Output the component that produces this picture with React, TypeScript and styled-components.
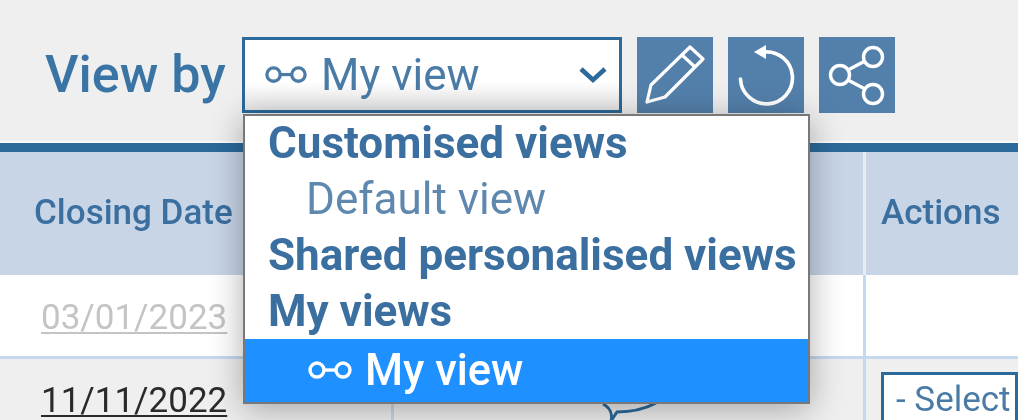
import React from "react";
import styled, { createGlobalStyle } from "styled-components";

const Global = createGlobalStyle`
  html, body { margin: 0; padding: 0; background: #efefef; }
  body { font-family: Roboto, "Liberation Sans", sans-serif; }
  #root { width: 1018px; height: 420px; overflow: hidden; }
`;

const Page = styled.div`
  position: relative;
  width: 1018px;
  height: 420px;
  overflow: hidden;
  background: #efefef;
  filter: blur(0.6px);
`;

const Toolbar = styled.div`
  height: 141px;
  box-sizing: border-box;
  padding: 37px 0 0 45px;
  display: flex;
  align-items: flex-start;
`;

const ViewLabel = styled.span`
  font-size: 52px;
  font-weight: 500;
  line-height: 76px;
  color: #3a74a4;
  margin-right: 14px;
  white-space: nowrap;
  width: 183px;
`;

const SelectBox = styled.div`
  width: 380px;
  height: 76px;
  box-sizing: border-box;
  border: 3px solid #2b6a9b;
  background: linear-gradient(#fff 60%, #e6e6e6);
  display: flex;
  align-items: center;
  padding: 0 12px 0 19px;
  color: #4a7ba6;
  font-size: 44px;
  gap: 13px;
  margin-right: 15px;
`;

const SelectText = styled.span`
  flex: 1;
  line-height: 1;
`;

const ToolButton = styled.div`
  width: 76px;
  height: 76px;
  background: #5380ab;
  color: #fff;
  margin-right: 15px;
  display: flex;
  align-items: center;
  justify-content: center;
`;

const Rule = styled.div`
  height: 9px;
  background: #2b6a9b;
  border-top: 2px solid #fafafa;
`;

const Grid = styled.div`
  display: grid;
  grid-template-columns: 394px 472px 1fr;
  grid-template-rows: 123px 84px 61px;
`;

const HeadCell = styled.div<{ $last?: boolean }>`
  background: #c8d5e7;
  color: #3a6f9f;
  font-size: 35px;
  font-weight: 500;
  display: flex;
  align-items: center;
  border-right: ${(p) => (p.$last ? "none" : "3px solid #e6ecf4")};
  box-sizing: border-box;
  padding-left: ${(p) => (p.$last ? "15px" : "34px")};
  padding-bottom: 2px;
  white-space: nowrap;
`;

const BodyCell = styled.div<{ $alt?: boolean; $last?: boolean }>`
  background: ${(p) => (p.$alt ? "#efefef" : "#fff")};
  border-right: ${(p) => (p.$last ? "none" : "3px solid #c5d9ee")};
  border-bottom: ${(p) => (p.$alt ? "none" : "3px solid #c5d9ee")};
  box-sizing: border-box;
  padding-left: ${(p) => (p.$last ? "15px" : "41px")};
  overflow: hidden;
  position: relative;
`;

const DateLink = styled.span<{ $muted?: boolean }>`
  display: block;
  font-size: 35px;
  line-height: 36px;
  padding-top: ${(p) => (p.$muted ? "25px" : "24px")};
  color: ${(p) => (p.$muted ? "#c4c4c4" : "#2a2a2a")};
  text-decoration: underline;
  text-underline-offset: 3px;
  text-decoration-thickness: 2px;
`;

const MiniSelect = styled.div`
  margin-top: 13px;
  height: 80px;
  border: 3px solid #2b6a9b;
  background: #fff;
  color: #4a7ba6;
  font-size: 35px;
  line-height: 50px;
  padding-left: 12px;
  white-space: nowrap;
`;

const Bubble = styled.svg`
  position: absolute;
  left: 206px;
  top: 44px;
`;

const Menu = styled.div`
  position: absolute;
  left: 243px;
  top: 114px;
  width: 567px;
  height: 290px;
  box-sizing: border-box;
  border: 2px solid #787878;
  background: #fff;
  box-shadow: 0 5px 32px rgba(0, 0, 0, 0.32);
  display: flex;
  flex-direction: column;
  padding-top: 1px;
`;

const GroupLabel = styled.div`
  height: 56px;
  line-height: 52px;
  padding-left: 23px;
  font-size: 44px;
  font-weight: 700;
  color: #3a6f9f;
  white-space: nowrap;
`;

const MenuOption = styled.div`
  height: 56px;
  line-height: 52px;
  padding-left: 61px;
  font-size: 44px;
  color: #5f88ae;
  white-space: nowrap;
`;

const ActiveOption = styled.div`
  flex: 1;
  margin-top: -2px;
  background: #1e90ff;
  color: #fff;
  font-size: 43.5px;
  font-weight: 500;
  display: flex;
  align-items: center;
  gap: 12px;
  padding-left: 62px;
`;

const Glasses = ({ color, width }: { color: string; width: number }) => (
  <svg width={width} height={width * 0.48} viewBox="0 0 46 22" fill="none" stroke={color} strokeWidth="3.4">
    <circle cx="10" cy="11" r="7" />
    <circle cx="36" cy="11" r="7" />
    <path d="M17 11h12" />
  </svg>
);

export default function App() {
  return (
    <Page>
      <Global />
      <Toolbar>
        <ViewLabel>View by</ViewLabel>
        <SelectBox>
          <Glasses color="#4a7ba6" width={44} />
          <SelectText>My view</SelectText>
          <svg width="28" height="18" viewBox="0 0 28 18" fill="none" stroke="#2b6a9b" strokeWidth="4.6">
            <path d="M2 3l12 11L26 3" />
          </svg>
        </SelectBox>
        <ToolButton>
          <svg width="60" height="64" viewBox="0 0 60 64" fill="none" stroke="#fff" strokeWidth="3.2" strokeLinejoin="round">
            <path d="M45 4l13 12-38 38-18 5 4-17z" />
            <path d="M37 12l13 12" />
          </svg>
        </ToolButton>
        <ToolButton>
          <svg width="60" height="64" viewBox="0 0 60 64" fill="none" stroke="#fff" strokeWidth="3.6">
            <path d="M4.5 36A26 26 0 1 0 28 9" strokeLinecap="round" />
            <path d="M18 9l12-7v14z" fill="#fff" stroke="none" />
          </svg>
        </ToolButton>
        <ToolButton>
          <svg width="60" height="64" viewBox="0 0 60 64" fill="none" stroke="#fff" strokeWidth="3.4">
            <circle cx="46" cy="14" r="9.5" />
            <circle cx="46" cy="51" r="9.5" />
            <circle cx="13" cy="32" r="9.5" />
            <path d="M21 27l17-9M21 37l17 9" />
          </svg>
        </ToolButton>
      </Toolbar>
      <Rule />
      <Grid>
        <HeadCell>Closing Date</HeadCell>
        <HeadCell />
        <HeadCell $last>Actions</HeadCell>
        <BodyCell>
          <DateLink $muted>03/01/2023</DateLink>
        </BodyCell>
        <BodyCell />
        <BodyCell $last />
        <BodyCell $alt>
          <DateLink>11/11/2022</DateLink>
        </BodyCell>
        <BodyCell $alt>
          <Bubble width="60" height="18" viewBox="0 0 60 18" fill="none" stroke="#2b6a9b" strokeWidth="3">
            <path d="M3 1c6 3 10 9 8 17M11 18l6-9c13 0 28-3 39-9" />
          </Bubble>
        </BodyCell>
        <BodyCell $alt $last>
          <MiniSelect>- Select</MiniSelect>
        </BodyCell>
      </Grid>
      <Menu>
        <GroupLabel>Customised views</GroupLabel>
        <MenuOption>Default view</MenuOption>
        <GroupLabel>Shared personalised views</GroupLabel>
        <GroupLabel>My views</GroupLabel>
        <ActiveOption>
          <Glasses color="#fff" width={46} />
          My view
        </ActiveOption>
      </Menu>
    </Page>
  );
}
